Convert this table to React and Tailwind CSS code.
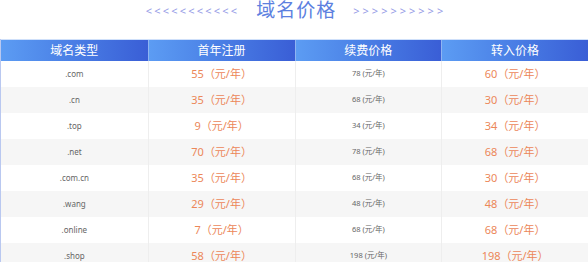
import React from 'react';

const rows = [
  { name: '.com', first: '55', renew: '78', transfer: '60' },
  { name: '.cn', first: '35', renew: '68', transfer: '30' },
  { name: '.top', first: '9', renew: '34', transfer: '34' },
  { name: '.net', first: '70', renew: '78', transfer: '68' },
  { name: '.com.cn', first: '35', renew: '68', transfer: '30' },
  { name: '.wang', first: '29', renew: '48', transfer: '48' },
  { name: '.online', first: '7', renew: '68', transfer: '68' },
  { name: '.shop', first: '58', renew: '198', transfer: '198' },
];

const heads = ['域名类型', '首年注册', '续费价格', '转入价格'];

const App = () => {
  return (
    <div
      className="w-[588px] h-[262px] overflow-hidden bg-white"
      style={{ fontFamily: '"Noto Sans", "Noto Sans CJK SC", sans-serif' }}
    >
      <div className="h-[39px] flex items-start justify-center pl-[4px]">
        <span className="text-[11px] leading-[22px] tracking-[2.2px] text-[#959be6] mr-[17px]">
          {'<<<<<<<<<<<'}
        </span>
        <h1 className="text-[19px] leading-[20px] tracking-[1px] text-[#5c80e0] font-normal">
          域名价格
        </h1>
        <span className="text-[11px] leading-[22px] tracking-[3px] text-[#959be6] ml-[17px]">
          {'>>>>>>>>>>'}
        </span>
      </div>
      <div className="border-l border-[#b9c8f0]">
        <div className="grid grid-cols-4 h-[22px] border-t border-[#cfe0fa]">
          {heads.map((h, i) => (
            <div
              key={h}
              className={`flex items-center justify-center text-[12px] text-white bg-gradient-to-r from-[#5c9cf3] to-[#3a5ed6] ${
                i > 0 ? 'border-l border-[#8fb4f2]' : ''
              }`}
            >
              {h}
            </div>
          ))}
        </div>
        {rows.map((r, i) => (
          <div
            key={r.name}
            className={`grid grid-cols-4 h-[26px] ${i % 2 === 1 ? 'bg-[#f6f6f6]' : 'bg-white'}`}
          >
            <div className="flex items-center justify-center text-[8px] text-[#666]">{r.name}</div>
            <div className="flex items-center justify-center text-[11px] text-[#ec8759] border-l border-[#eeeeee]">
              {r.first}（元/年）
            </div>
            <div className="flex items-center justify-center text-[7.5px] text-[#666] border-l border-[#eeeeee]">
              {r.renew} (元/年)
            </div>
            <div className="flex items-center justify-center text-[11px] text-[#ec8759] border-l border-[#eeeeee]">
              {r.transfer}（元/年）
            </div>
          </div>
        ))}
      </div>
    </div>
  );
};

export default App;
